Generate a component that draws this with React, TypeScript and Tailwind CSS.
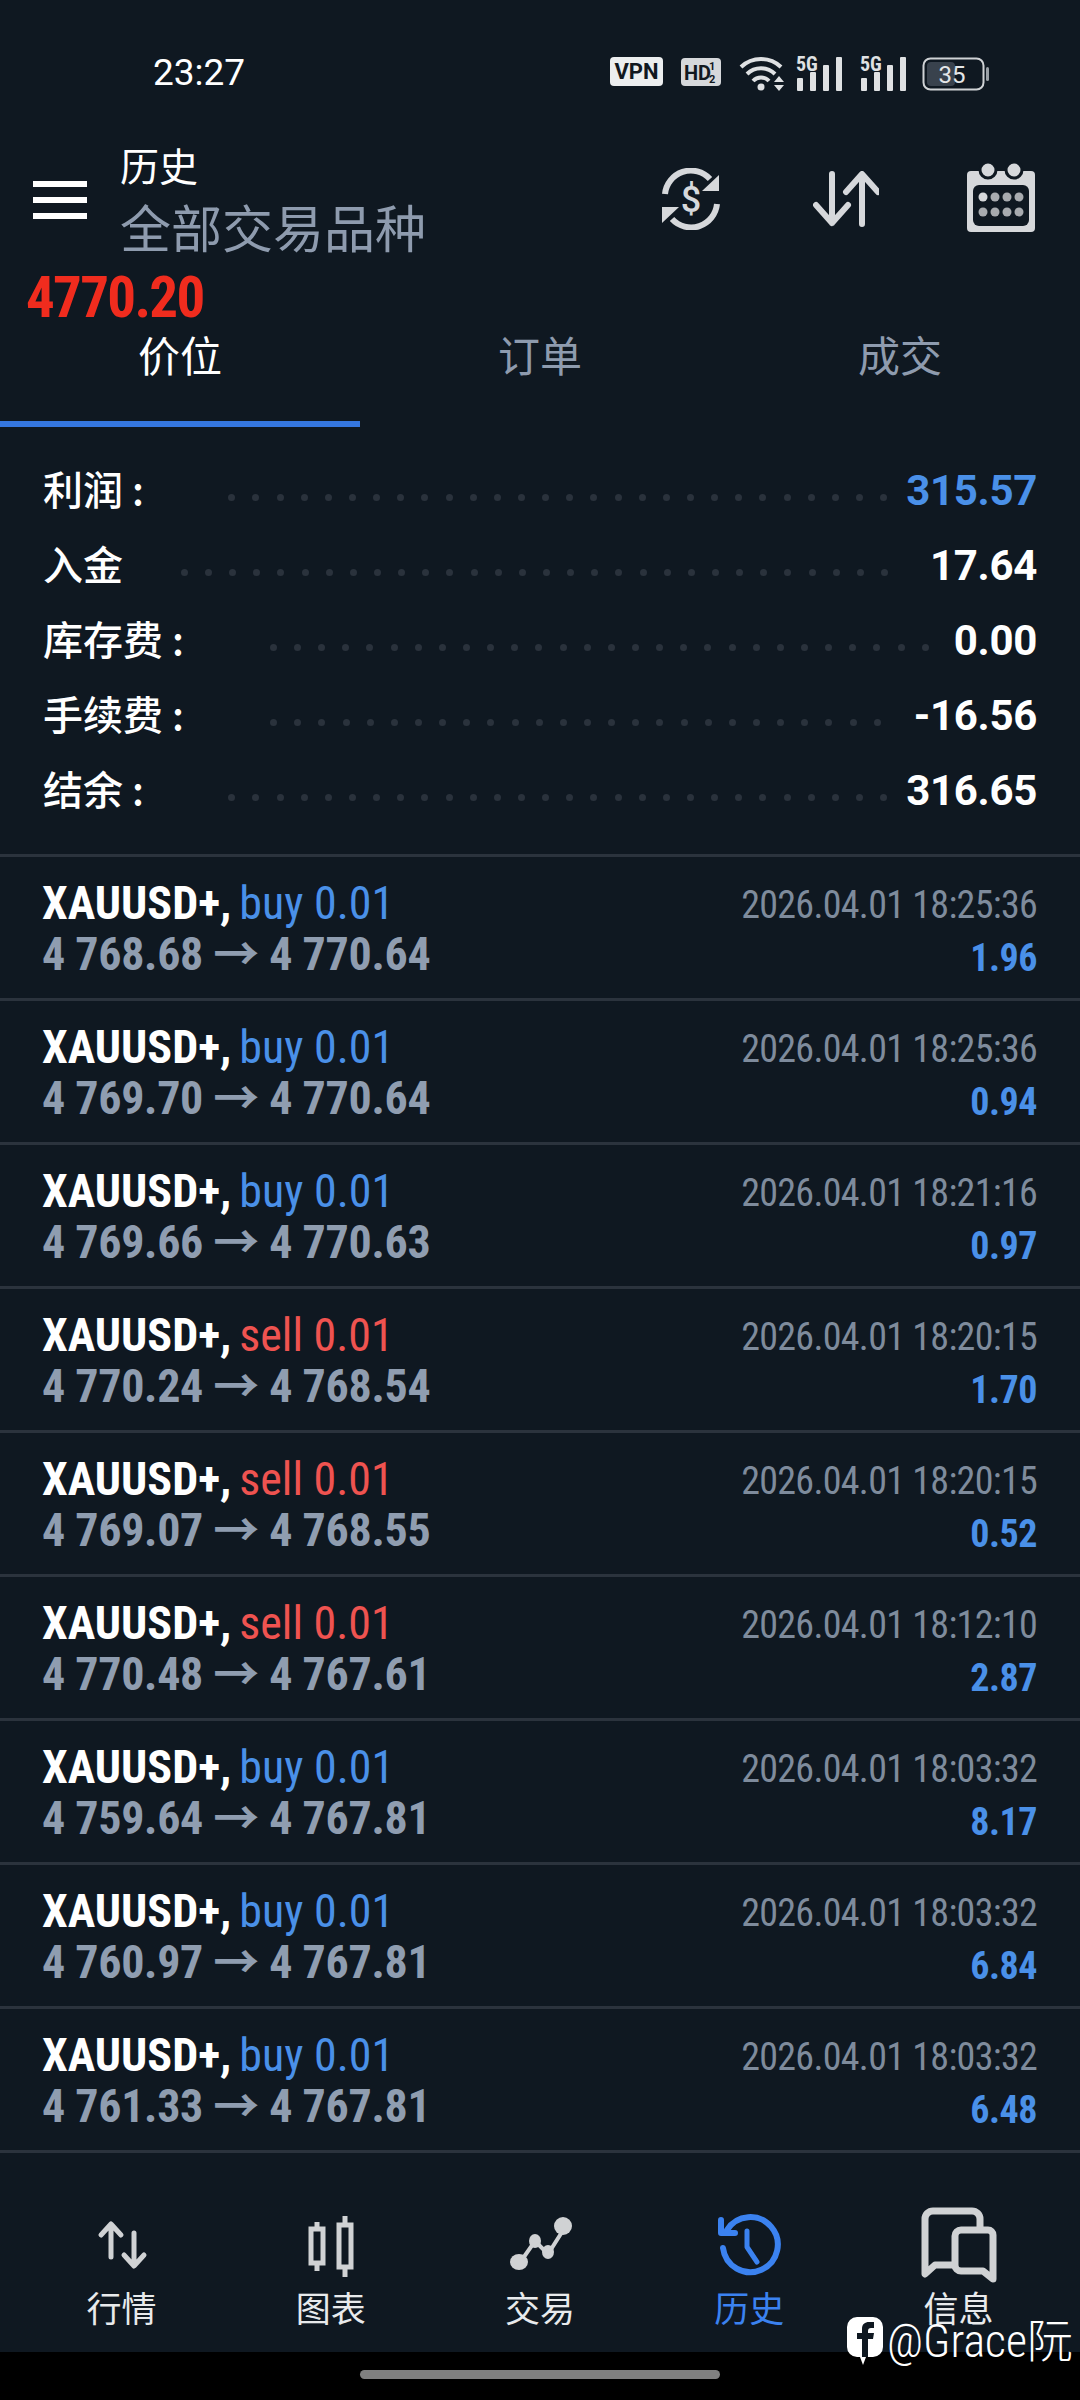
const latin = "font-['Roboto','Noto_Sans_CJK_SC',sans-serif] font-stretch-condensed";

const stats = [
  { label: '利润 :', value: '315.57', color: 'text-[#4a90e8]', dots: 28, dotsRight: 'pr-[19px]' },
  { label: '入金', value: '17.64', color: 'text-white', dots: 30, dotsRight: 'pr-[42px]' },
  { label: '库存费 :', value: '0.00', color: 'text-white', dots: 28, dotsRight: 'pr-[25px]' },
  { label: '手续费 :', value: '-16.56', color: 'text-white', dots: 26, dotsRight: 'pr-[33px]' },
  { label: '结余 :', value: '316.65', color: 'text-white', dots: 28, dotsRight: 'pr-[19px]' },
];

const deals = [
  { side: 'buy', prices: '4 768.68 → 4 770.64', time: '2026.04.01 18:25:36', profit: '1.96' },
  { side: 'buy', prices: '4 769.70 → 4 770.64', time: '2026.04.01 18:25:36', profit: '0.94' },
  { side: 'buy', prices: '4 769.66 → 4 770.63', time: '2026.04.01 18:21:16', profit: '0.97' },
  { side: 'sell', prices: '4 770.24 → 4 768.54', time: '2026.04.01 18:20:15', profit: '1.70' },
  { side: 'sell', prices: '4 769.07 → 4 768.55', time: '2026.04.01 18:20:15', profit: '0.52' },
  { side: 'sell', prices: '4 770.48 → 4 767.61', time: '2026.04.01 18:12:10', profit: '2.87' },
  { side: 'buy', prices: '4 759.64 → 4 767.81', time: '2026.04.01 18:03:32', profit: '8.17' },
  { side: 'buy', prices: '4 760.97 → 4 767.81', time: '2026.04.01 18:03:32', profit: '6.84' },
  { side: 'buy', prices: '4 761.33 → 4 767.81', time: '2026.04.01 18:03:32', profit: '6.48' },
];

function StatusBar() {
  return (
    <div className="flex h-[140px] shrink-0 items-start pt-[55px] pl-[153px] text-[#e4e6e8]">
      <div className="w-[457px] font-['Roboto',sans-serif] text-[37px] leading-[36px] text-white">23:27</div>
      <svg width="400" height="40" viewBox="0 0 400 40" className="-mt-[3px]">
        <rect x="0" y="5" width="53" height="29" rx="4" fill="#eceeef" />
        <text x="26.5" y="27" textAnchor="middle" fontFamily="Roboto" fontWeight="700" fontSize="22" fill="#11181f">VPN</text>
        <rect x="71" y="6" width="40" height="28" rx="4" fill="#d6d8db" />
        <text x="74" y="28" fontFamily="Roboto" fontWeight="700" fontSize="20" fill="#11181f">HD</text>
        <text x="99" y="18" fontFamily="Roboto" fontWeight="700" fontSize="11" fill="#11181f">1</text>
        <text x="99" y="31" fontFamily="Roboto" fontWeight="700" fontSize="11" fill="#11181f">2</text>
        <g fill="none" stroke="#dfe1e3" strokeWidth="4">
          <path d="M131 15a29 29 0 0 1 40 0" />
          <path d="M137 22a20 20 0 0 1 28 0" />
          <path d="M143 29a11 11 0 0 1 16 0" />
        </g>
        <circle cx="151" cy="35" r="3.5" fill="#dfe1e3" />
        <path d="M164 30l5-6 5 6zM164 33h10l-5 6z" fill="#dfe1e3" />
        {[186, 250].map((x) => (
          <g key={x} fill="#dfe1e3">
            <text x={x} y="19" fontFamily="Roboto" fontWeight="700" fontSize="20" style={{ fontStretch: '75%' }}>5G</text>
            <rect x={x + 1} y="26" width="6" height="13" rx="1" />
            <rect x={x + 14} y="20" width="6" height="19" rx="1" />
            <rect x={x + 27} y="13" width="6" height="26" rx="1" />
            <rect x={x + 40} y="5" width="6" height="34" rx="1" />
          </g>
        ))}
        <rect x="313.5" y="6.5" width="60" height="31" rx="7" fill="none" stroke="#cfd2d5" strokeWidth="2" />
        <rect x="317" y="10" width="28" height="24" rx="4" fill="#39424d" />
        <rect x="376" y="15" width="3" height="14" rx="1.5" fill="#9aa0a6" />
        <text x="342" y="31" textAnchor="middle" fontFamily="Roboto" fontSize="24" fill="#e4e6e8">35</text>
      </svg>
    </div>
  );
}

function SyncDollarIcon() {
  return (
    <svg width="62" height="62" viewBox="0 0 62 62" fill="none" stroke="#d6d8db" strokeWidth="6">
      <path d="M5 26A26 26 0 0 1 50 11" />
      <path d="M57 36A26 26 0 0 1 12 51" />
      <path d="M59 7v16H42z" fill="#d6d8db" stroke="none" />
      <path d="M2 55V39h17z" fill="#d6d8db" stroke="none" />
      <text x="31" y="44" textAnchor="middle" fontFamily="Roboto" fontWeight="500" fontSize="36" fill="#d6d8db" stroke="none">$</text>
    </svg>
  );
}

function SortIcon() {
  return (
    <svg width="66" height="56" viewBox="0 0 66 56" fill="none" stroke="#d6d8db" strokeWidth="6" strokeLinecap="round" strokeLinejoin="round">
      <path d="M19 3v49M3 34l16 18 16-18" />
      <path d="M49 53V4M33 21L49 3l16 18" />
    </svg>
  );
}

function CalendarIcon() {
  return (
    <svg width="70" height="70" viewBox="0 0 70 70">
      <path d="M5 9h60a4 4 0 0 1 4 4v53a4 4 0 0 1-4 4H5a4 4 0 0 1-4-4V13a4 4 0 0 1 4-4z" fill="#d6d8db" />
      <circle cx="22" cy="8" r="8" fill="#d6d8db" stroke="#0f1821" strokeWidth="3" />
      <circle cx="48" cy="8" r="8" fill="#d6d8db" stroke="#0f1821" strokeWidth="3" />
      <rect x="7" y="23" width="56" height="41" rx="6" fill="#0f1821" />
      {[17, 29, 41, 53].map((x, i) => (
        <g key={x}>
          <circle cx={x} cy="35" r="4.5" fill={i === 0 ? '#d6d8db' : '#a8abaf'} />
          <circle cx={x} cy="50" r="4.5" fill="#a8abaf" />
        </g>
      ))}
    </svg>
  );
}

function Header() {
  return (
    <div className="flex h-[128px] shrink-0 items-start">
      <div className="mt-[41px] ml-[33px] flex w-[54px] flex-col gap-[10px]">
        <div className="h-[6px] bg-white" />
        <div className="h-[6px] bg-white" />
        <div className="h-[6px] bg-white" />
      </div>
      <div className="-mt-[3px] ml-[33px] flex w-[540px] flex-col font-['Noto_Sans_CJK_SC',sans-serif]">
        <div className="h-[54px] text-[39px] leading-[54px] text-white">历史</div>
        <div className="text-[51px] leading-[70px] whitespace-nowrap text-[#8e9bae]">全部交易品种</div>
      </div>
      <div className="mt-[25px] flex items-center">
        <SyncDollarIcon />
        <div className="ml-[91px]"><SortIcon /></div>
        <div className="ml-[87px] -mt-[3px]"><CalendarIcon /></div>
      </div>
    </div>
  );
}

function Tabs() {
  const tabs = ['价位', '订单', '成交'];
  return (
    <div className="grid h-[101px] shrink-0 grid-cols-3 font-['Noto_Sans_CJK_SC',sans-serif]">
      {tabs.map((tab, i) => (
        <div key={tab} className="flex h-full flex-col">
          <div className={`flex-1 text-center text-[42px] leading-[56px] ${i === 0 ? 'text-white' : 'text-[#8e9bae]'}`}>
            {tab}
          </div>
          <div className={`h-[6px] ${i === 0 ? 'bg-[#3577e0]' : ''}`} />
        </div>
      ))}
    </div>
  );
}

function Stats() {
  return (
    <div className="flex h-[427px] shrink-0 flex-col px-[43px] pt-[26px]">
      {stats.map((s) => (
        <div key={s.label} className="flex h-[75px] items-center justify-between">
          <span className="-mt-[5px] font-['Noto_Sans_CJK_SC',sans-serif] text-[40px] font-medium whitespace-pre text-white">{s.label}</span>
          <div className={`mt-[14px] flex flex-1 items-center justify-end gap-[17.15px] ${s.dotsRight}`}>
            {Array.from({ length: s.dots }).map((_, i) => (
              <span key={i} className="size-[7px] rounded-full bg-[#2a323c]" />
            ))}
          </div>
          <span className={`font-['Roboto',sans-serif] text-[42px] font-bold tracking-[-0.3px] ${s.color}`}>{s.value}</span>
        </div>
      ))}
    </div>
  );
}

function DealRow({ deal }: { deal: (typeof deals)[number] }) {
  return (
    <div className={`${latin} flex h-[144px] items-start justify-between border-t-[3px] border-[#2b333d] pt-[21px] pr-[43px] pl-[42px]`}>
      <div className="flex flex-col">
        <div className="text-[46px] leading-[50px] whitespace-nowrap">
          <span className="font-bold text-white">XAUUSD+,</span>
          <span className={`ml-[8px] ${deal.side === 'buy' ? 'text-[#4a90e8]' : 'text-[#ef5350]'}`}>{deal.side} 0.01</span>
        </div>
        <div className="mt-[1px] text-[46px] leading-[50px] font-bold tracking-[-0.3px] whitespace-nowrap text-[#8f9db0]">{deal.prices}</div>
      </div>
      <div className="flex flex-col items-end">
        <div className="mt-[4px] text-[38px] leading-[46px] tracking-[-0.7px] text-[#7e8b9c]">{deal.time}</div>
        <div className="mt-[7px] text-[38px] leading-[46px] font-bold tracking-[-0.5px] text-[#4a90e8]">{deal.profit}</div>
      </div>
    </div>
  );
}

function MarketIcon() {
  return (
    <svg width="80" height="80" viewBox="0 0 80 80" fill="none" stroke="#d0d2d4" strokeWidth="5" strokeLinecap="round" strokeLinejoin="round">
      <path d="M29 52V20M19 30l10-11 10 11" />
      <path d="M52 28v31M42 50l10 11 10-11" />
    </svg>
  );
}

function ChartIcon() {
  return (
    <svg width="80" height="80" viewBox="0 0 80 80" fill="none" stroke="#d0d2d4" strokeWidth="5">
      <rect x="20" y="24" width="12" height="34" />
      <rect x="48" y="20" width="12" height="42" />
      <path d="M26 17v7M26 58v8M54 11v9M54 62v10" />
    </svg>
  );
}

function TradeIcon() {
  return (
    <svg width="80" height="80" viewBox="0 0 80 80" fill="#d0d2d4" stroke="#d0d2d4">
      <path d="M19 59L35 36l13 13 21-33" fill="none" strokeWidth="4" />
      <ellipse cx="19" cy="57" rx="9" ry="8" stroke="none" />
      <ellipse cx="35" cy="36" rx="6" ry="7" stroke="none" />
      <ellipse cx="48" cy="47" rx="6" ry="7" stroke="none" />
      <ellipse cx="63" cy="21" rx="9" ry="9" stroke="none" />
    </svg>
  );
}

function HistoryIcon() {
  return (
    <svg width="80" height="80" viewBox="0 0 80 80" fill="none" stroke="#3b82f0" strokeWidth="6" strokeLinecap="round" strokeLinejoin="round">
      <path d="M18 25a27.5 27.5 0 1 1-4 18" />
      <path d="M12 15v13h14" />
      <path d="M38 26v16l10 15" strokeWidth="5" />
    </svg>
  );
}

function MessageIcon() {
  return (
    <svg width="80" height="80" viewBox="0 0 80 80" fill="none" stroke="#d0d2d4" strokeWidth="7" strokeLinejoin="round">
      <path d="M38 60H17l-10 9V14a8 8 0 0 1 8-8h39a8 8 0 0 1 8 8v10" />
      <path d="M37 31a6 6 0 0 1 6-6h27a5 5 0 0 1 5 5v44l-10-8H43a6 6 0 0 1-6-6z" />
    </svg>
  );
}

function BottomNav() {
  const items = [
    { label: '行情', icon: <MarketIcon /> },
    { label: '图表', icon: <ChartIcon /> },
    { label: '交易', icon: <TradeIcon /> },
    { label: '历史', icon: <HistoryIcon />, active: true },
    { label: '信息', icon: <MessageIcon /> },
  ];
  return (
    <div className="grid h-[202px] shrink-0 grid-cols-5 border-t-[3px] border-[#2b333d] px-[17px] pt-[52px] font-['Noto_Sans_CJK_SC',sans-serif]">
      {items.map((item) => (
        <div key={item.label} className="flex flex-col items-center">
          {item.icon}
          <span className={`text-[35px] leading-[44px] ${item.active ? 'text-[#3b82f0]' : 'text-[#e8eaec]'}`}>{item.label}</span>
        </div>
      ))}
    </div>
  );
}

function Watermark() {
  return (
    <div className="absolute top-[2316px] left-[847px] flex items-center gap-[4px]">
      <svg width="36" height="48" viewBox="0 0 36 48">
        <path d="M10 0h16a10 10 0 0 1 10 10v20a10 10 0 0 1-10 10H19l-3 8-3-8h-3A10 10 0 0 1 0 30V10A10 10 0 0 1 10 0z" fill="#fff" />
        <path d="M15 40V22h-5v-6h5v-4c0-5 3-7 7-7h5v6h-3c-2 0-3 1-3 3v2h6l-1 6h-5v18z" fill="#0f1821" />
      </svg>
      <span className="font-['Roboto','Noto_Sans_CJK_SC',sans-serif] text-[46px] leading-[50px] font-light font-stretch-condensed whitespace-nowrap text-white">@Grace阮</span>
    </div>
  );
}

export default function App() {
  return (
    <div className="relative flex h-[2400px] w-[1080px] flex-col overflow-hidden bg-[#0f1821]">
      <StatusBar />
      <Header />
      <div className={`${latin} h-[58px] shrink-0 pl-[26px] text-[57px] leading-[60px] font-bold tracking-[-1.7px] text-[#f02c1e]`}>4770.20</div>
      <Tabs />
      <Stats />
      <div className="flex h-[1296px] shrink-0 flex-col">
        {deals.map((deal, i) => (
          <DealRow key={i} deal={deal} />
        ))}
      </div>
      <BottomNav />
      <div className="flex flex-1 items-start justify-center bg-black pt-[18px]">
        <div className="h-[9px] w-[360px] rounded-full bg-[#808080]" />
      </div>
      <Watermark />
    </div>
  );
}
